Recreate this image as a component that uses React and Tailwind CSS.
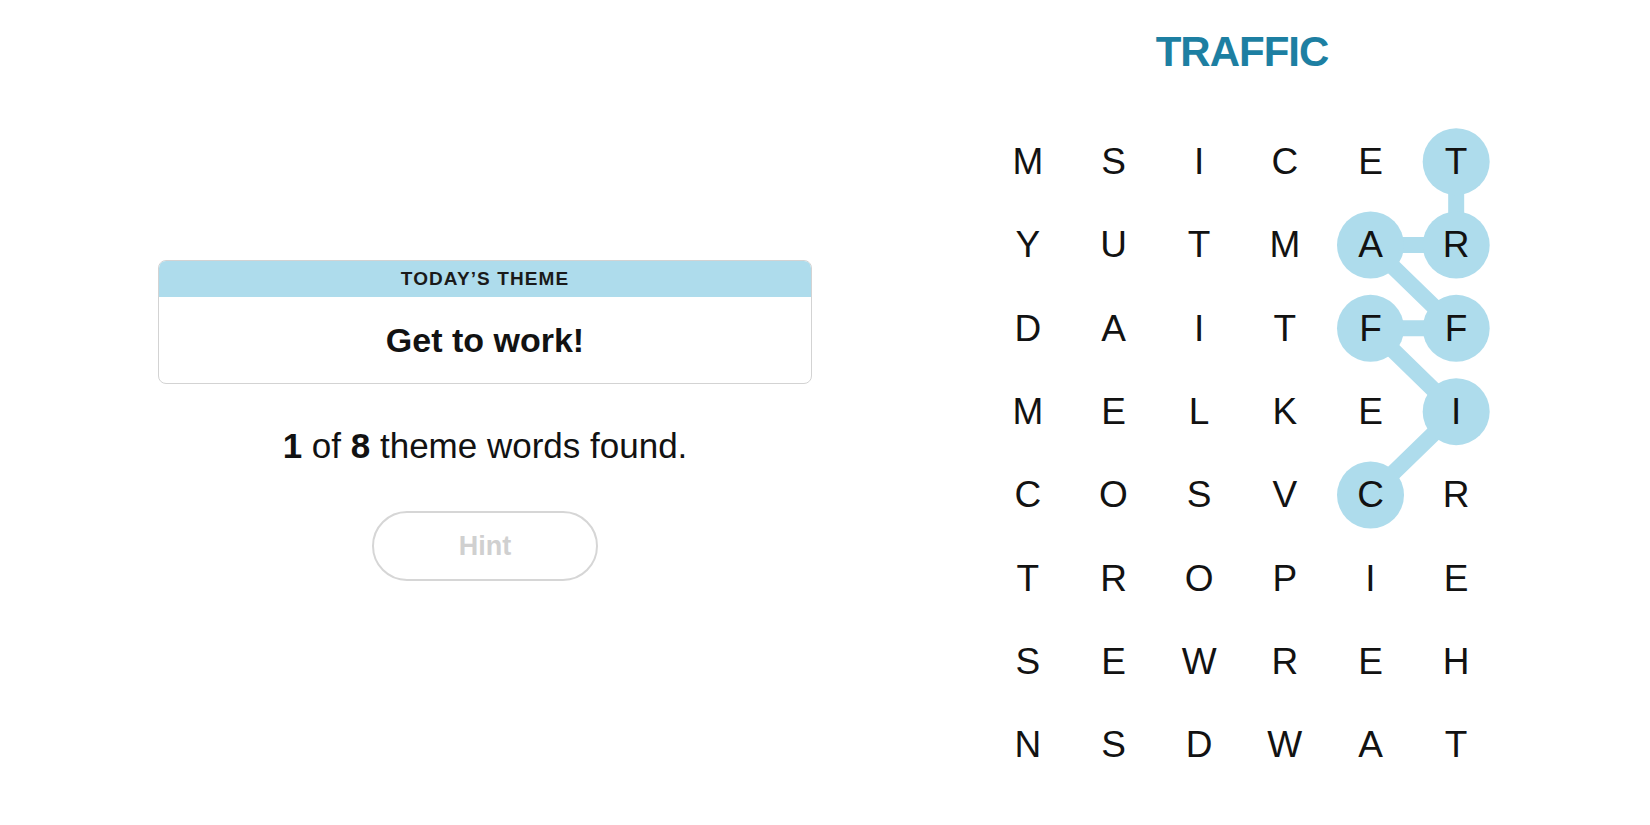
const GRID = [
  'MSICET',
  'YUTMAR',
  'DAITFF',
  'MELKEI',
  'COSVCR',
  'TROPIE',
  'SEWREH',
  'NSDWAT',
]

// cells of the found word, in order
const PATH = [
  [0, 5],
  [1, 5],
  [1, 4],
  [2, 5],
  [2, 4],
  [3, 5],
  [4, 4],
]

const CELL_W = 85.67
const CELL_H = 83.33

const cx = (c) => CELL_W / 2 + c * CELL_W
const cy = (r) => CELL_H / 2 + r * CELL_H

function Board() {
  return (
    <div className="relative w-[514px] h-[667px]">
      <svg className="absolute inset-0" width="514" height="667">
        <polyline
          points={PATH.map(([r, c]) => `${cx(c)},${cy(r)}`).join(' ')}
          fill="none"
          stroke="#aedcec"
          strokeWidth="16"
          strokeLinejoin="round"
        />
        {PATH.map(([r, c]) => (
          <circle key={`${r}-${c}`} cx={cx(c)} cy={cy(r)} r="33.5" fill="#aedcec" />
        ))}
      </svg>
      <div className="relative grid grid-cols-6">
        {GRID.map((row, r) =>
          row.split('').map((ch, c) => (
            <div
              key={`${r}-${c}`}
              className="flex items-center justify-center h-[83.33px] text-[37px] leading-none text-[#121212]"
            >
              {ch}
            </div>
          ))
        )}
      </div>
    </div>
  )
}

export default function App() {
  return (
    <div
      className="w-[1650px] h-[825px] flex bg-white text-[#121212]"
      style={{ fontFamily: '"Liberation Sans", Arial, sans-serif' }}
    >
      <div className="w-[970px] flex flex-col items-center pt-[260px]">
        <div className="w-[654px] rounded-lg border border-[#d3d3d3] overflow-hidden">
          <div className="h-[36px] bg-[#aedcec] flex items-center justify-center text-[19px] font-bold tracking-[1.1px] text-[#1a1a1a]">
            TODAY’S THEME
          </div>
          <div className="h-[86px] flex items-center justify-center text-[34px] font-bold">
            Get to work!
          </div>
        </div>
        <p className="mt-[41px] h-[40px] flex items-center text-[35px] leading-none">
          <b>1</b>&nbsp;of&nbsp;<b>8</b>&nbsp;theme words found.
        </p>
        <button className="mt-[46px] w-[226px] h-[70px] rounded-full border-2 border-[#d6d6d6] text-[27px] font-bold text-[#d0d0d0]">
          Hint
        </button>
      </div>

      <div className="ml-[15px] w-[514px] flex flex-col items-center">
        <h1 className="mt-[31px] h-[46px] text-[42px] leading-none font-bold tracking-[-1px] text-[#1d7fa2]">
          TRAFFIC
        </h1>
        <div className="mt-[43px]">
          <Board />
        </div>
      </div>
    </div>
  )
}
